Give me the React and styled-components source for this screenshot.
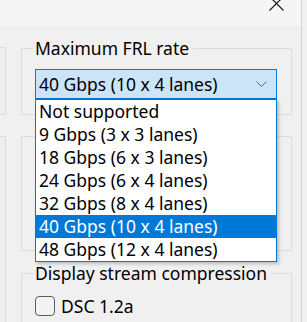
import React from 'react';
import styled, { createGlobalStyle } from 'styled-components';

const GlobalStyle = createGlobalStyle`
    html, body {
        margin: 0;
        padding: 0;
        background: #f0f0f0;
    }
    body {
        font-family: "Noto Sans", "Open Sans", sans-serif;
    }
`;

const StyledWindow = styled.div`
    width: 307px;
    height: 322px;
    overflow: hidden;
    display: flex;
    background: #f0f0f0;
    color: #000;
    font-size: 17.5px;
`;
const StyledWindow__Main = styled.div`
    width: 301px;
    display: flex;
    flex-direction: column;
`;
const StyledWindow__Edge = styled.div`
    flex: 1;
    border-left: 1px solid #d4d4d4;
`;

const StyledTitleBar = styled.div`
    height: 26px;
    flex: none;
    background: #f5f5f5;
    display: flex;
    justify-content: flex-end;
    padding-right: 16px;
`;

const StyledBody = styled.div`
    flex: 1;
    display: flex;
    align-items: flex-start;
    gap: 15px;
`;

const StyledSide = styled.div`
    width: 6px;
    display: flex;
    flex-direction: column;
`;
const StyledSide__Box = styled.div`
    box-sizing: border-box;
    margin-top: 21px;
    height: ${p => p.$height}px;
    border: 1px solid #dcdcdc;
    border-left: none;
    ${p => p.$open && 'border-bottom: none;'}
`;

const StyledColumn = styled.div`
    width: 271px;
    display: flex;
    flex-direction: column;
`;

const StyledGroup = styled.fieldset`
    box-sizing: border-box;
    margin: ${p => p.$top}px 0 0;
    padding: ${p => p.$padTop}px 14px ${p => p.$padBottom}px 13px;
    min-inline-size: 0;
    border: 1px solid #dcdcdc;
    ${p => p.$open && 'border-bottom: none;'}
`;
const StyledGroup__Legend = styled.legend`
    margin-left: -2px;
    padding: 0 4px 0 2px;
    line-height: 20px;
    white-space: nowrap;
`;
const StyledPlainGroup = styled.div`
    box-sizing: border-box;
    margin-top: ${p => p.$top}px;
    height: ${p => p.$height}px;
    border: 1px solid #dcdcdc;
`;

const StyledCombo = styled.div`
    position: relative;
`;
const StyledCombo__Field = styled.div`
    box-sizing: border-box;
    height: 30px;
    border: 1px solid #0078d7;
    background: #cce4f7;
    display: flex;
    align-items: center;
    justify-content: space-between;
    padding: 0 9px 0 3px;
    white-space: nowrap;
`;
const StyledCombo__List = styled.ul`
    position: absolute;
    top: 100%;
    left: 0;
    width: 242px;
    box-sizing: border-box;
    margin: 0;
    padding: 0;
    list-style: none;
    background: #fff;
    border: 1px solid #0078d7;
    box-shadow: 2px 2px 3px rgba(0, 0, 0, 0.22);
    z-index: 2;
`;
const StyledCombo__Item = styled.li`
    height: 23px;
    line-height: 23px;
    padding-left: 3px;
    white-space: nowrap;
    background: ${p => (p.$selected ? '#0078d7' : 'transparent')};
    color: ${p => (p.$selected ? '#fff' : '#000')};
`;

const StyledCheckRow = styled.label`
    display: flex;
    align-items: center;
    gap: 6px;
    line-height: 20px;
`;
const StyledCheckBox = styled.span`
    box-sizing: border-box;
    width: 20px;
    height: 20px;
    border: 1px solid #5c5c5c;
    border-radius: 4px;
    background: #f3f3f3;
`;

const rates = [
    'Not supported',
    '9 Gbps (3 x 3 lanes)',
    '18 Gbps (6 x 3 lanes)',
    '24 Gbps (6 x 4 lanes)',
    '32 Gbps (8 x 4 lanes)',
    '40 Gbps (10 x 4 lanes)',
    '48 Gbps (12 x 4 lanes)',
];
const selected = 5;

function CloseIcon() {
    return (
        <svg width="16" height="12" viewBox="0 0 16 12" style={{ overflow: 'visible' }}>
            <path d="M0.5 -3.5 L14.5 10.5 M14.5 -3.5 L0.5 10.5" stroke="#1a1a1a" strokeWidth="1.2" fill="none" />
        </svg>
    );
}

function Chevron() {
    return (
        <svg width="11" height="6" viewBox="0 0 11 6">
            <path d="M0.5 0.5 L5.5 5.5 L10.5 0.5" stroke="#606060" strokeWidth="1" fill="none" />
        </svg>
    );
}

export default function App() {
    return (
        <>
            <GlobalStyle />
            <StyledWindow>
                <StyledWindow__Main>
                    <StyledTitleBar>
                        <CloseIcon />
                    </StyledTitleBar>
                    <StyledBody>
                        <StyledSide>
                            <StyledSide__Box $height={68} />
                            <StyledSide__Box $height={200} $open />
                        </StyledSide>
                        <StyledColumn>
                            <StyledGroup $top={12} $padTop={11} $padBottom={15}>
                                <StyledGroup__Legend>Maximum FRL rate</StyledGroup__Legend>
                                <StyledCombo>
                                    <StyledCombo__Field>
                                        <span>{rates[selected]}</span>
                                        <Chevron />
                                    </StyledCombo__Field>
                                    <StyledCombo__List>
                                        {rates.map((r, i) => (
                                            <StyledCombo__Item key={r} $selected={i === selected}>{r}</StyledCombo__Item>
                                        ))}
                                    </StyledCombo__List>
                                </StyledCombo>
                            </StyledGroup>
                            <StyledPlainGroup $top={21} $height={115} />
                            <StyledGroup $top={12} $padTop={13} $padBottom={20} $open>
                                <StyledGroup__Legend>Display stream compression</StyledGroup__Legend>
                                <StyledCheckRow>
                                    <StyledCheckBox />
                                    <span>DSC 1.2a</span>
                                </StyledCheckRow>
                            </StyledGroup>
                        </StyledColumn>
                    </StyledBody>
                </StyledWindow__Main>
                <StyledWindow__Edge />
            </StyledWindow>
        </>
    );
}
